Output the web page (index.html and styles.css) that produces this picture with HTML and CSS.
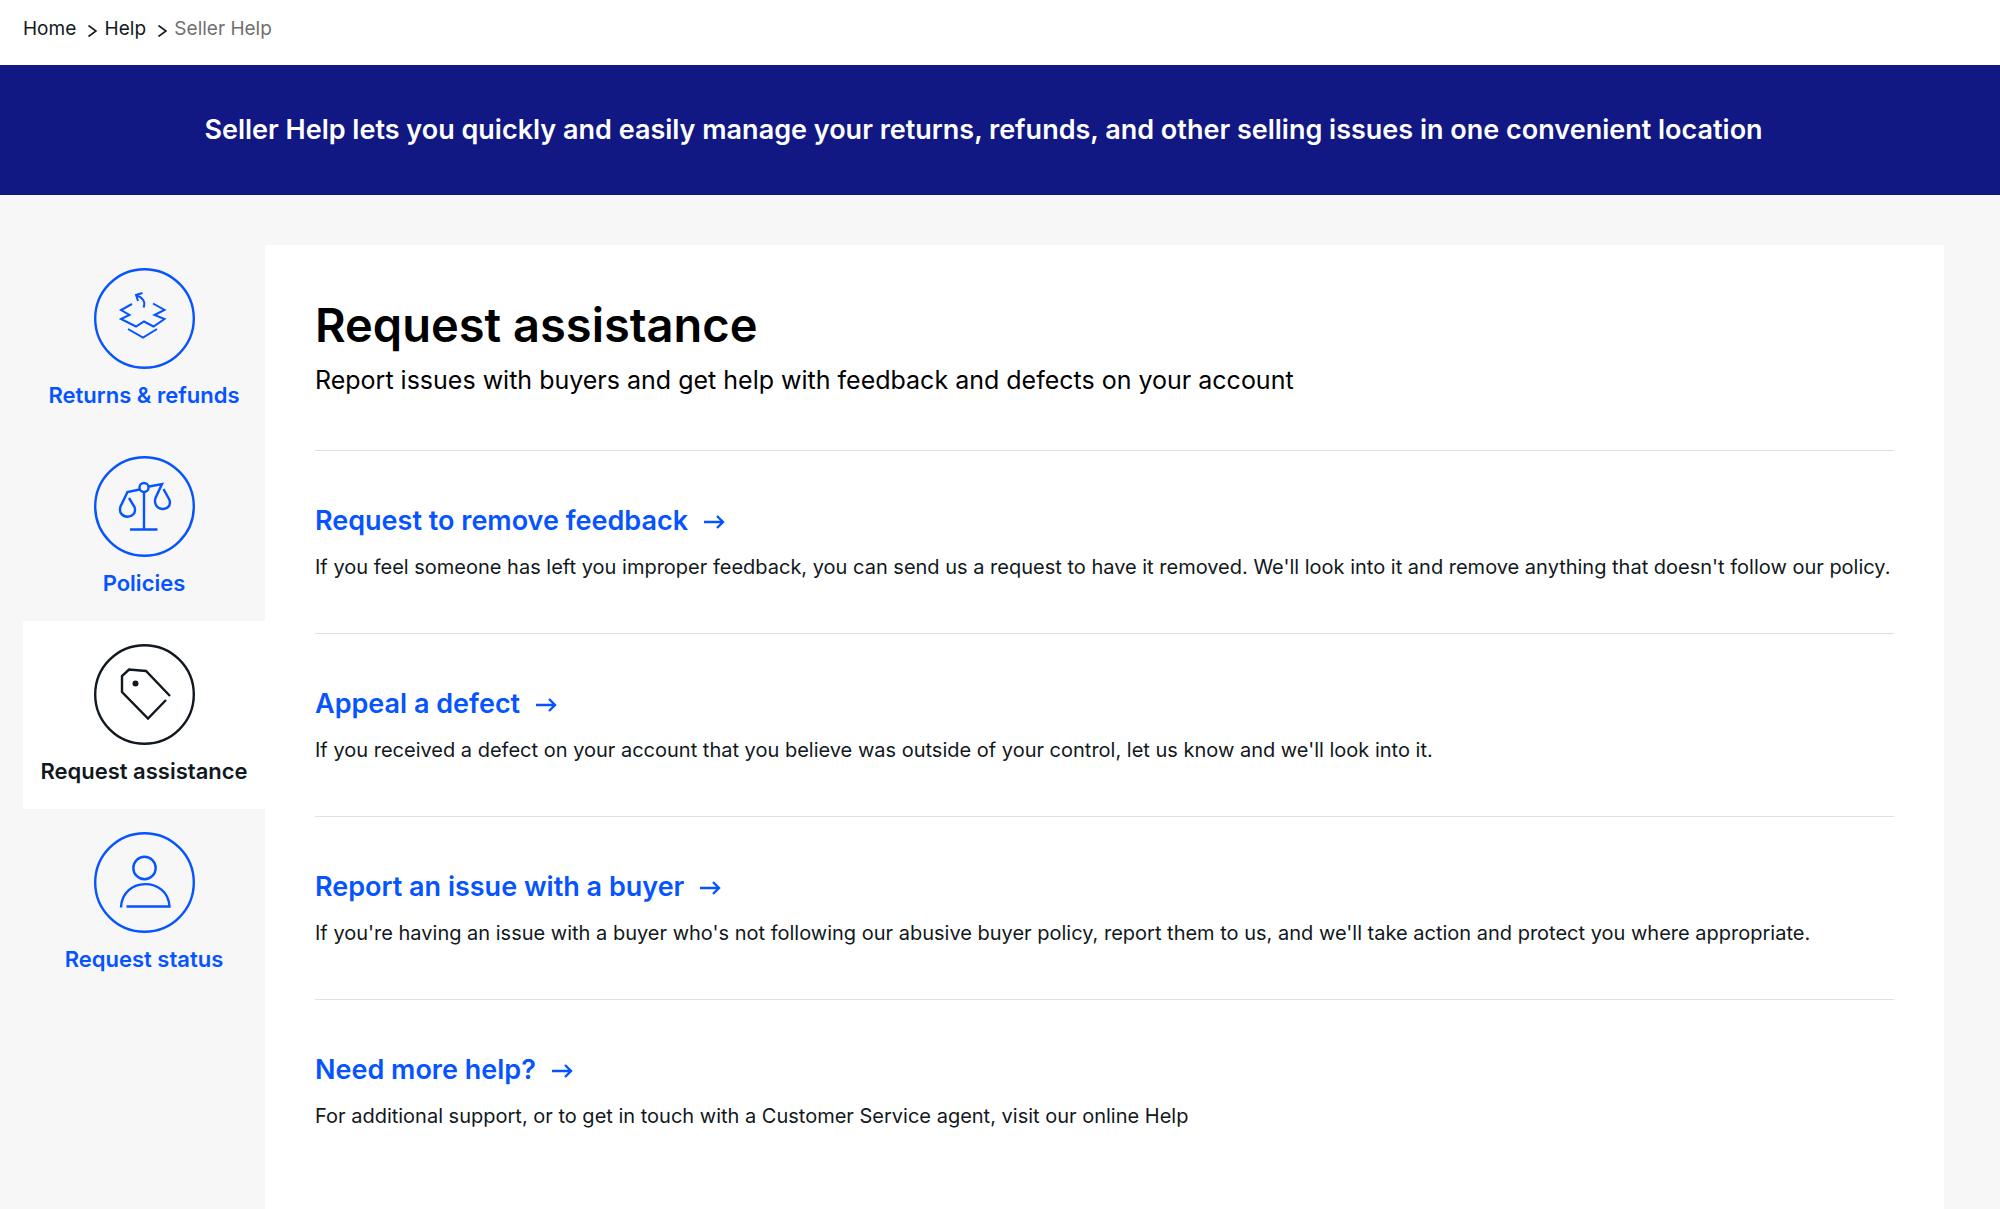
FILE: index.html
```
<!DOCTYPE html>
<html lang="en">

<head>
  <meta charset="UTF-8" />
  <meta name="viewport" content="width=device-width, initial-scale=1.0" />
  <title>Seller Help</title>
  <link rel="stylesheet" href="styles.css">
</head>

<body>

  <nav class="breadcrumbs" aria-label="Breadcrumb">
    <ol>
      <li><a href="#">Home</a></li>
      <li>
        <svg class="chevron" viewBox="0 0 9 12" stroke-width="1.6"><path d="M.5.5L8 6 .5 11.500" /></svg>
        <a href="#">Help</a>
      </li>
      <li>
        <svg class="chevron" viewBox="0 0 9 12" stroke-width="1.6"><path d="M.5.5L8 6 .5 11.500" /></svg>
        <span class="current">Seller Help</span>
      </li>
    </ol>
  </nav>

  <header class="banner">
    <p>Seller Help lets you quickly and easily manage your returns, refunds, and other selling issues in one convenient location</p>
  </header>

  <div class="layout">

    <!-- Sidebar -->
    <nav class="sidebar" aria-label="Seller Help">
      <a class="tab" href="#">
        <svg class="tab-icon" viewBox="0 0 101 101" stroke-width="2.4">
          <circle cx="50.5" cy="50.5" r="49.3" />
          <path d="M38 36l-11 6 8.500 5-8.500 4 15 7.500 8-5 9.500 5 11-7.500-10-4 10-5-11.500-6.500" stroke-width="2" />
          <path d="M34 61l15 8.500 14-8.500" stroke-width="2" />
          <path d="M49.500 39.500c2.500-6-1-10-7-12M48.500 25l-6.500 2 2 6" stroke-width="2" />
        </svg>
        <span>Returns &amp; refunds</span>
      </a>
      <a class="tab" href="#">
        <svg class="tab-icon" viewBox="0 0 101 101" stroke-width="2.4">
          <circle cx="50.5" cy="50.5" r="49.3" />
          <circle cx="50" cy="31.5" r="4.5" />
          <path d="M50 36v37.500M36 73.500h27.500" />
          <path d="M45.500 33.500l-12 2.500-7 14.500c-4 13.500 18 13.500 14 .5l-5.500-9" />
          <path d="M55 30.500l13-2.500-6.500 14c-4 14 17.500 14.500 14 2l-6-11" />
        </svg>
        <span>Policies</span>
      </a>
      <a class="tab active" href="#" aria-current="page">
        <svg class="tab-icon" viewBox="0 0 101 101" stroke-width="2.4">
          <circle cx="50.5" cy="50.5" r="49.3" />
          <path d="M76 52L52 27l-17-1.500-7 6.500v16l26 26.500L72 56" />
          <circle class="dot" cx="41.5" cy="39.5" r="3" />
        </svg>
        <span>Request assistance</span>
      </a>
      <a class="tab" href="#">
        <svg class="tab-icon" viewBox="0 0 101 101" stroke-width="2.4">
          <circle cx="50.5" cy="50.5" r="49.3" />
          <circle cx="50.5" cy="36" r="11.2" />
          <path d="M27 75.500c1-31 47-31 48.500-1h-43" />
        </svg>
        <span>Request status</span>
      </a>
    </nav>

    <main class="card">
      <div class="intro">
        <h1>Request assistance</h1>
        <p>Report issues with buyers and get help with feedback and defects on your account</p>
      </div>

      <section class="topic">
        <h2><a href="#">Request to remove feedback <svg class="arrow" viewBox="0 0 22 16" stroke-width="2.4"><path d="M1 8h19M14 2l6 6-6 6" /></svg></a></h2>
        <p>If you feel someone has left you improper feedback, you can send us a request to have it removed. We'll look into it and remove anything that doesn't follow our policy.</p>
      </section>

      <section class="topic">
        <h2><a href="#">Appeal a defect <svg class="arrow" viewBox="0 0 22 16" stroke-width="2.4"><path d="M1 8h19M14 2l6 6-6 6" /></svg></a></h2>
        <p>If you received a defect on your account that you believe was outside of your control, let us know and we'll look into it.</p>
      </section>

      <section class="topic">
        <h2><a href="#">Report an issue with a buyer <svg class="arrow" viewBox="0 0 22 16" stroke-width="2.4"><path d="M1 8h19M14 2l6 6-6 6" /></svg></a></h2>
        <p>If you're having an issue with a buyer who's not following our abusive buyer policy, report them to us, and we'll take action and protect you where appropriate.</p>
      </section>

      <section class="topic">
        <h2><a href="#">Need more help? <svg class="arrow" viewBox="0 0 22 16" stroke-width="2.4"><path d="M1 8h19M14 2l6 6-6 6" /></svg></a></h2>
        <p>For additional support, or to get in touch with a Customer Service agent, visit our online Help</p>
      </section>
    </main>

  </div>

</body>
</html>
```

FILE: styles.css
```
:root {
  --blue: #0654ff;
  --navy: #111884;
  --grey: #f7f7f7;
  --line: #e0e0e0;
}

* {
  margin: 0;
  padding: 0;
  box-sizing: border-box;
}

body {
  min-height: 100vh;
  display: flex;
  flex-direction: column;
  background: var(--grey);
  color: #111820;
  font-family: Inter, "Liberation Sans", sans-serif;
  font-size: 20px;
}

a {
  color: inherit;
  text-decoration: none;
}

svg {
  fill: none;
  stroke: currentColor;
}

/* Breadcrumbs */
.breadcrumbs {
  padding: 16px 23px 23px;
  background: #ffffff;
  font-size: 19px;
  line-height: 26px;
}

.breadcrumbs ol {
  display: flex;
  gap: 12px;
  list-style: none;
}

.chevron {
  width: 9px;
  height: 12px;
  margin-right: 2px;
  vertical-align: -2px;
}

.current {
  color: #707070;
}

/* Banner */
.banner {
  padding: 45px 56px 45px 23px;
  background: var(--navy);
  color: #ffffff;
  font-size: 27px;
  font-weight: 600;
  line-height: 40px;
  text-align: center;
}

/* Page columns */
.layout {
  flex-grow: 1;
  display: flex;
  padding: 50px 56px 0 23px;
}

.sidebar {
  flex: 0 0 242px;
}

.tab {
  display: flex;
  flex-direction: column;
  align-items: center;
  gap: 12px;
  padding: 23px 0 24px;
  color: var(--blue);
  font-size: 22px;
  font-weight: 600;
  line-height: 28px;
}

.tab.active {
  background: #ffffff;
  color: #111820;
}

.tab-icon {
  width: 101px;
  height: 101px;
}

.dot {
  fill: currentColor;
  stroke: none;
}

.card {
  flex-grow: 1;
  padding: 50px;
  background: #ffffff;
}

.intro {
  padding-bottom: 49px;
}

.intro h1 {
  margin-bottom: 4px;
  color: #000000;
  font-size: 47px;
  font-weight: 600;
  line-height: 60px;
}

.intro p {
  color: #000000;
  font-size: 25px;
  line-height: 42px;
}

.topic {
  padding: 50px 0 44px;
  border-top: 1px solid var(--line);
}

.topic h2 {
  margin-bottom: 4px;
  color: var(--blue);
  font-size: 27px;
  font-weight: 600;
  line-height: 40px;
}

.topic p {
  line-height: 44px;
}

.arrow {
  width: 22px;
  height: 16px;
  margin-left: 8px;
}
```
